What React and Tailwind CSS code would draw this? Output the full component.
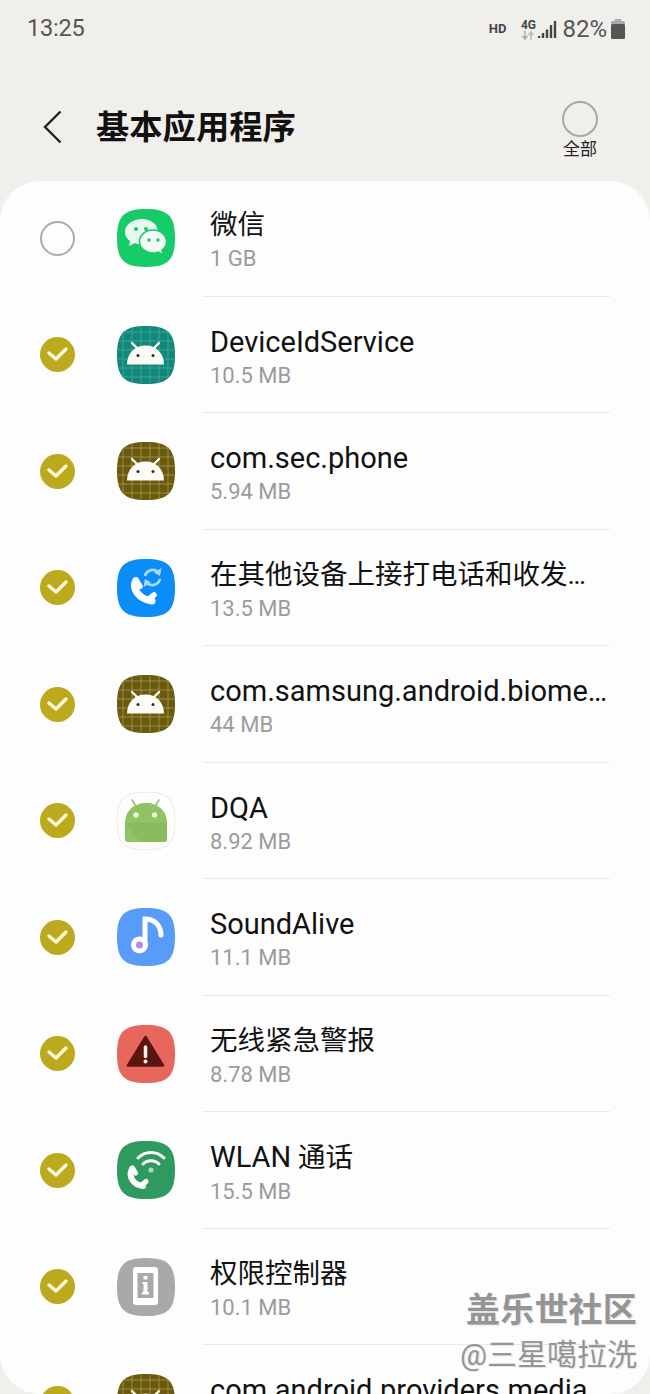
const SQUIRCLE = 'M29 0C51 0 58 7 58 29C58 51 51 58 29 58C7 58 0 51 0 29C0 7 7 0 29 0Z'
const cjk = { fontFamily: 'Roboto, "Noto Sans CJK SC", sans-serif' }

function Squircle({ fill, stroke, children }) {
  return (
    <svg width="58" height="58" viewBox="0 0 58 58" className="block shrink-0">
      <path d={SQUIRCLE} fill={fill} stroke={stroke} />
      {children}
    </svg>
  )
}

function WechatIcon() {
  return (
    <Squircle fill="#17cb68">
      <path d="M25 10C16 10 8 15.500 8 23C8 27 10 30 13 32L12 37L18 34C20 35 23 35.500 25 35.500C34 35.500 41 30 41 23C41 15.500 34 10 25 10Z" fill="#e8f8ee" />
      <path d="M36 21C28.500 21 22.500 26 22.500 32.500C22.500 39 28.500 44 36 44C38 44 40 43.600 41.500 43L46 46L45 41C48 39 49.500 36 49.500 32.500C49.500 26 43.500 21 36 21Z" fill="#f4fbf6" stroke="#17cb68" strokeWidth="1.500" />
      <circle cx="19" cy="20" r="2" fill="#17cb68" />
      <circle cx="29" cy="20" r="2" fill="#17cb68" />
      <circle cx="32" cy="31" r="1.700" fill="#17cb68" />
      <circle cx="41" cy="31" r="1.700" fill="#17cb68" />
    </Squircle>
  )
}

function AndroidIcon({ fill, grid }) {
  const lines = [6, 15, 24, 33, 42, 51]
  return (
    <Squircle fill={fill}>
      {lines.map(p => (
        <g key={p} stroke={grid} strokeWidth="0.800">
          <line x1={p} y1={p === 6 || p === 51 ? 6 : 1} x2={p} y2={p === 6 || p === 51 ? 52 : 57} />
          <line x1={p === 6 || p === 51 ? 6 : 1} y1={p} x2={p === 6 || p === 51 ? 52 : 57} y2={p} />
        </g>
      ))}
      <path d="M15 17L21 23M42 17L36 23" stroke="#fdfbf5" strokeWidth="2.400" strokeLinecap="round" />
      <path d="M10 38.500C10 27 18 19.500 28.500 19.500C39 19.500 47 27 47 38.500Z" fill="#fdfbf5" />
      <circle cx="21" cy="29.500" r="1.500" fill="#2c2c1c" />
      <circle cx="36" cy="29.500" r="1.500" fill="#2c2c1c" />
    </Squircle>
  )
}

function CallSyncIcon() {
  return (
    <Squircle fill="#0a8df6">
      <path d="M18.500 22C15 29 21 40 35 42" fill="none" stroke="#fff" strokeWidth="7" strokeLinecap="round" />
      <path d="M19 21L23 27.500M32 40L37 36" fill="none" stroke="#fff" strokeWidth="5.500" strokeLinecap="round" />
      <path d="M28 17A8 8 0 0 1 42 14M43 20A8 8 0 0 1 29 23" fill="none" stroke="#a5dafd" strokeWidth="2.800" />
      <path d="M44.500 9L43 17L37 13.500Z" fill="#a5dafd" />
      <path d="M26.500 28L28 20L34 23.500Z" fill="#a5dafd" />
    </Squircle>
  )
}

function DqaIcon() {
  return (
    <Squircle fill="#fdfdfd" stroke="#e8e8e8">
      <path d="M15 8L20 16M42 8L37 16" stroke="#9cc878" strokeWidth="1.800" strokeLinecap="round" />
      <path d="M8 47V31C8 19 17 11 29 11C41 11 50 19 50 31V47C50 49 49 50 47 50H11C9 50 8 49 8 47Z" fill="#90c363" />
      <path d="M8 31H50V47C50 49 49 50 47 50H24Z" fill="#8abb5d" />
      <circle cx="19" cy="23" r="2.700" fill="#eef6e6" />
      <circle cx="37.500" cy="23" r="2.700" fill="#eef6e6" />
    </Squircle>
  )
}

function MusicIcon() {
  return (
    <Squircle fill="#569cf8">
      <path d="M28 37V11C37 11 44 17 44 27" fill="none" stroke="#fff" strokeWidth="5" strokeLinecap="round" />
      <circle cx="22.500" cy="37" r="8.500" fill="#fff" />
      <circle cx="22.500" cy="37" r="3.500" fill="#b48aea" />
    </Squircle>
  )
}

function AlertIcon() {
  return (
    <Squircle fill="#e8675c">
      <path d="M28.500 12L46 40.500H11Z" fill="#5a150e" stroke="#5a150e" strokeWidth="2.500" strokeLinejoin="round" />
      <path d="M28.500 22V31.500" stroke="#fdeee8" strokeWidth="3.500" strokeLinecap="round" />
      <circle cx="28.500" cy="36.500" r="2" fill="#fdeee8" />
    </Squircle>
  )
}

function WlanCallIcon() {
  return (
    <Squircle fill="#2f9a60">
      <path d="M15 28C11 35 16 44 26 45" fill="none" stroke="#fff" strokeWidth="6" strokeLinecap="round" />
      <path d="M15.500 27L18.500 32M25 44L29 40.500" fill="none" stroke="#fff" strokeWidth="5" strokeLinecap="round" />
      <path d="M21 17C28 9.500 40 9.500 47 17" fill="none" stroke="#fff" strokeWidth="3" strokeLinecap="round" />
      <path d="M26 23C30 18.500 38 18.500 42 23" fill="none" stroke="#fff" strokeWidth="3" strokeLinecap="round" />
      <circle cx="34" cy="29" r="2.600" fill="#a3dcb8" />
    </Squircle>
  )
}

function InfoIcon() {
  return (
    <Squircle fill="#a9a9a9">
      <rect x="16" y="9" width="25" height="38" rx="3" fill="#fff" />
      <rect x="20.500" y="15" width="16" height="25" fill="#a9a9a9" />
      <rect x="26.500" y="18" width="4" height="3.500" fill="#fff" />
      <path d="M25.500 24H30.500V34H32V36.500H25V34H26.500V26H25.500Z" fill="#fff" />
    </Squircle>
  )
}

const apps = [
  { name: '微信', size: '1 GB', icon: <WechatIcon />, off: true },
  { name: 'DeviceIdService', size: '10.5 MB', icon: <AndroidIcon fill="#12887b" grid="#4aaa9c" />, latin: true },
  { name: 'com.sec.phone', size: '5.94 MB', icon: <AndroidIcon fill="#6a5a10" grid="#a89a52" />, latin: true },
  { name: '在其他设备上接打电话和收发…', size: '13.5 MB', icon: <CallSyncIcon /> },
  { name: 'com.samsung.android.biome…', size: '44 MB', icon: <AndroidIcon fill="#6a5a10" grid="#a89a52" />, latin: true },
  { name: 'DQA', size: '8.92 MB', icon: <DqaIcon />, latin: true },
  { name: 'SoundAlive', size: '11.1 MB', icon: <MusicIcon />, latin: true },
  { name: '无线紧急警报', size: '8.78 MB', icon: <AlertIcon /> },
  { name: <><span className="text-[29px]">WLAN</span> 通话</>, size: '15.5 MB', icon: <WlanCallIcon /> },
  { name: '权限控制器', size: '10.1 MB', icon: <InfoIcon /> },
  { name: 'com.android.providers.media', size: '2.1 MB', icon: <AndroidIcon fill="#6a5a10" grid="#a89a52" />, latin: true },
]

function Check({ off }) {
  if (off) return <div className="w-[35px] h-[35px] shrink-0 rounded-full border-2 border-[#ababab]" />
  return (
    <div className="w-[35px] h-[35px] shrink-0 rounded-full bg-[#bca91d] flex items-center justify-center">
      <svg width="23" height="17" viewBox="0 0 23 17">
        <path d="M3 7L10 13L20 3" fill="none" stroke="#fdf9d8" strokeWidth="3.500" strokeLinecap="round" strokeLinejoin="round" />
      </svg>
    </div>
  )
}

function AppRow({ app }) {
  return (
    <div className="flex items-center h-[116.5px] shrink-0 pl-10">
      <Check off={app.off} />
      <div className="ml-[42px]">{app.icon}</div>
      <div className="ml-7 w-[407px] self-stretch flex flex-col justify-center pl-[7px] pt-1 border-b border-[#e9e9e9]">
        <div className={app.latin ? 'text-[29px] leading-[36px] text-[#111] whitespace-nowrap' : 'text-[27.5px] leading-[36px] text-[#111] whitespace-nowrap'}>{app.name}</div>
        <div className="text-[22px] leading-[26px] mt-[3px] text-[#9b9b9b]">{app.size}</div>
      </div>
    </div>
  )
}

function StatusBar() {
  return (
    <div className="h-14 flex items-center justify-between pl-[27px] pr-[25px] pt-[2px] text-[#555]">
      <span className="text-[23.500px] tracking-[-0.2px]">13:25</span>
      <div className="flex items-center">
        <span className="text-[13px] font-bold text-[#444]">HD</span>
        <div className="ml-[14px] w-[16px] flex flex-col items-center">
          <span className="text-[12px] leading-[12px] font-bold text-[#444]">4G</span>
          <svg width="14" height="9" viewBox="0 0 14 9">
            <path d="M4 0V7M1.500 5L4 8L6.500 5" fill="none" stroke="#aaa" strokeWidth="1.500" />
            <path d="M10 9V2M7.500 4L10 1L12.500 4" fill="none" stroke="#bbb" strokeWidth="1.500" />
          </svg>
        </div>
        <svg width="19" height="20" viewBox="0 0 19 20" className="ml-[2px]">
          <path d="M1 17V19M5 14V19M9 10.500V19M13 6V19M17 2V19" stroke="#444" strokeWidth="2.400" />
        </svg>
        <span className="ml-[5px] text-[24px] leading-none">82%</span>
        <svg width="14" height="20" viewBox="0 0 14 20" className="ml-[4px]">
          <rect x="4" y="0" width="6" height="3" fill="#aaa" />
          <rect x="0" y="2" width="14" height="6" rx="1.500" fill="#aaa" />
          <rect x="0" y="5" width="14" height="15" rx="1.500" fill="#555" />
        </svg>
      </div>
    </div>
  )
}

export default function App() {
  return (
    <div className="relative w-[650px] h-[1394px] overflow-hidden bg-[#f1efec] flex flex-col" style={cjk}>
      <StatusBar />
      <div className="h-[125px] shrink-0 pt-[17px] flex items-center pr-[52px]">
        <svg width="20" height="34" viewBox="0 0 20 34" className="ml-[43px]">
          <path d="M17.500 1.500L2 17L17.500 32.500" fill="none" stroke="#222" strokeWidth="2.400" />
        </svg>
        <h1 className="ml-[33px] mt-[1px] text-[33.3px] font-bold text-[#111]">基本应用程序</h1>
        <div className="ml-auto flex flex-col items-center mt-[6px]">
          <div className="w-[36px] h-[36px] rounded-full border-2 border-[#a8a8a8]" />
          <span className="text-[17px] leading-[22px] mt-[1px] text-[#222]">全部</span>
        </div>
      </div>
      <div className="flex-1 min-h-0 overflow-hidden rounded-[40px] bg-[#fdfdfd]">
        <div className="-mt-px flex flex-col">
          {apps.map(a => <AppRow key={a.size + a.latin} app={a} />)}
        </div>
      </div>
      <div className="absolute right-[13px] top-[1288px] flex flex-col items-end text-[#959595]">
        <span className="text-[34px] leading-[44px] font-bold tracking-[0.2px] [text-shadow:1px_1px_0_#e4e4e4]">盖乐世社区</span>
        <span className="text-[30px] leading-[40px] mt-[3px] [text-shadow:1px_1px_0_#e4e4e4]">@三星噶拉洗</span>
      </div>
    </div>
  )
}
